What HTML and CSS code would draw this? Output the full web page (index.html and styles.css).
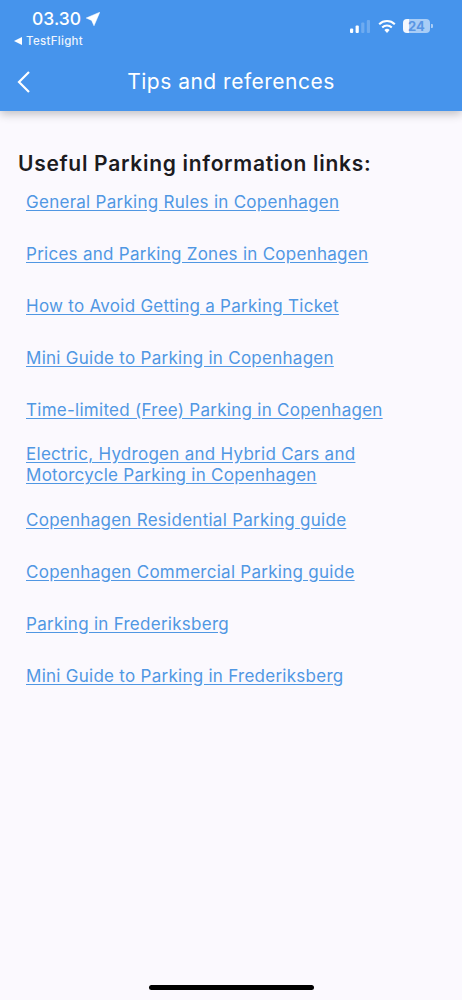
FILE: index.html
```html
<!DOCTYPE html>
<html lang="en">
<head>
<meta charset="utf-8">
<title>Tips and references</title>
<link rel="stylesheet" href="styles.css">
</head>
<body>
<header class="appbar">
  <div class="status">
    <div class="status-left">
      <div class="time-row">
        <span class="time">03.30</span>
        <svg class="loc" viewBox="0 0 14 14" width="14" height="14"><path d="M13.8 0.2 L0.2 6 L5.6 8.4 L8 13.8 Z" fill="#fff" stroke="#fff" stroke-width=".5" stroke-linejoin="round"/></svg>
      </div>
      <div class="back-app"><span class="tri"></span><span>TestFlight</span></div>
    </div>
    <div class="status-right">
      <svg class="signal" viewBox="0 0 21 13" width="21" height="13">
        <rect x="0" y="8.5" width="3.2" height="4.5" rx="1" fill="#fff"/>
        <rect x="5.6" y="5.5" width="3.2" height="7.5" rx="1" fill="#fff"/>
        <rect x="11.2" y="2.5" width="3.2" height="10.5" rx="1" fill="#fff" fill-opacity=".22"/>
        <rect x="16.8" y="0" width="3.2" height="13" rx="1" fill="#fff" fill-opacity=".22"/>
      </svg>
      <svg class="wifi" viewBox="0 0 18 14" width="18" height="14">
        <path d="M1.2 5.2 A11.2 11.2 0 0 1 16.8 5.2" fill="none" stroke="#fff" stroke-width="2.1"/>
        <path d="M4.2 8.4 A7 7 0 0 1 13.8 8.4" fill="none" stroke="#fff" stroke-width="2.1"/>
        <path d="M9 14 L6.4 11 A3.7 3.7 0 0 1 11.6 11 Z" fill="#fff"/>
      </svg>
      <div class="battery"><span class="battery-num">24</span><span class="battery-tip"></span></div>
    </div>
  </div>
  <nav class="nav">
    <svg class="chevron" viewBox="0 0 14 22" width="14" height="22"><path d="M12 1 L2 11 L12 21" fill="none" stroke="#fff" stroke-width="2.2"/></svg>
    <h1 class="title">Tips and references</h1>
  </nav>
</header>
<main class="content">
  <h2 class="heading">Useful Parking information links:</h2>
  <ul class="links">
    <li><a href="#">General Parking Rules in Copenhagen</a></li>
    <li><a href="#">Prices and Parking Zones in Copenhagen</a></li>
    <li><a href="#">How to Avoid Getting a Parking Ticket</a></li>
    <li><a href="#">Mini Guide to Parking in Copenhagen</a></li>
    <li><a href="#">Time-limited (Free) Parking in Copenhagen</a></li>
    <li><a href="#">Electric, Hydrogen and Hybrid Cars and<br>Motorcycle Parking in Copenhagen</a></li>
    <li><a href="#">Copenhagen Residential Parking guide</a></li>
    <li><a href="#">Copenhagen Commercial Parking guide</a></li>
    <li><a href="#">Parking in Frederiksberg</a></li>
    <li><a href="#">Mini Guide to Parking in Frederiksberg</a></li>
  </ul>
</main>
<div class="home-indicator"></div>
</body>
</html>
```
FILE: styles.css
```css
* { box-sizing: border-box; }
html, body { margin: 0; padding: 0; }
body {
  width: 462px;
  height: 1000px;
  overflow: hidden;
  position: relative;
  background: #fbf9fe;
  font-family: Inter, "Liberation Sans", sans-serif;
}
.appbar {
  height: 111px;
  background: #4694ec;
  color: #fff;
  box-shadow: 0 3px 9px rgba(0,0,0,.24);
  display: flex;
  flex-direction: column;
}
.status {
  height: 57px;
  display: flex;
  justify-content: space-between;
  padding: 9px 32px 0 14px;
}
.status-left { display: flex; flex-direction: column; }
.time-row { display: flex; align-items: center; gap: 5px; padding-left: 18px; height: 20px; }
.time { font-size: 17.5px; font-weight: 500; line-height: 20px; }
.loc { margin-top: -1px; }
.back-app { display: flex; align-items: center; gap: 4px; margin-top: 2px; font-size: 11.5px; letter-spacing: .3px; line-height: 20px; font-weight: 500; color: #eef5fd; }
.tri { width: 0; height: 0; border-style: solid; border-width: 4px 8px 4px 0; border-color: transparent #fff transparent transparent; }
.status-right { display: flex; align-items: flex-start; gap: 7px; padding-top: 10px; }
.signal { margin-top: 1px; }
.battery {
  position: relative;
  width: 27px;
  height: 14px;
  background: linear-gradient(to right, #f4f8fe 0, #f4f8fe 24%, #a9cdf6 24%);
  border-radius: 4px;
  display: flex;
  align-items: center;
  justify-content: center;
}
.battery-num { font-size: 13px; font-weight: 700; color: #5a96e4; line-height: 14px; }
.battery-tip { position: absolute; right: -2.5px; top: 5px; width: 1.5px; height: 4px; background: #a9cdf6; border-radius: 0 1px 1px 0; }
.nav {
  position: relative;
  height: 54px;
  display: flex;
  justify-content: center;
}
.chevron { position: absolute; left: 17px; top: 13.5px; }
.title { margin: 0; font-size: 21px; font-weight: 400; letter-spacing: .5px; line-height: 50px; }
.content { padding: 41px 18px 0; }
.heading { margin: 0; font-size: 21px; font-weight: 600; letter-spacing: .7px; line-height: 24px; color: #1c1b1f; }
.links { list-style: none; margin: 0; padding: 0 0 0 8px; }
.links li { min-height: 52px; padding: 8px 0; display: flex; align-items: center; line-height: 21px; font-size: 17px; letter-spacing: .27px; }
.links a { color: #5097e3; text-decoration: underline; text-underline-offset: 2px; }
.home-indicator {
  position: absolute;
  left: 149px;
  top: 985px;
  width: 165px;
  height: 5px;
  background: #000;
  border-radius: 3px;
}
```
